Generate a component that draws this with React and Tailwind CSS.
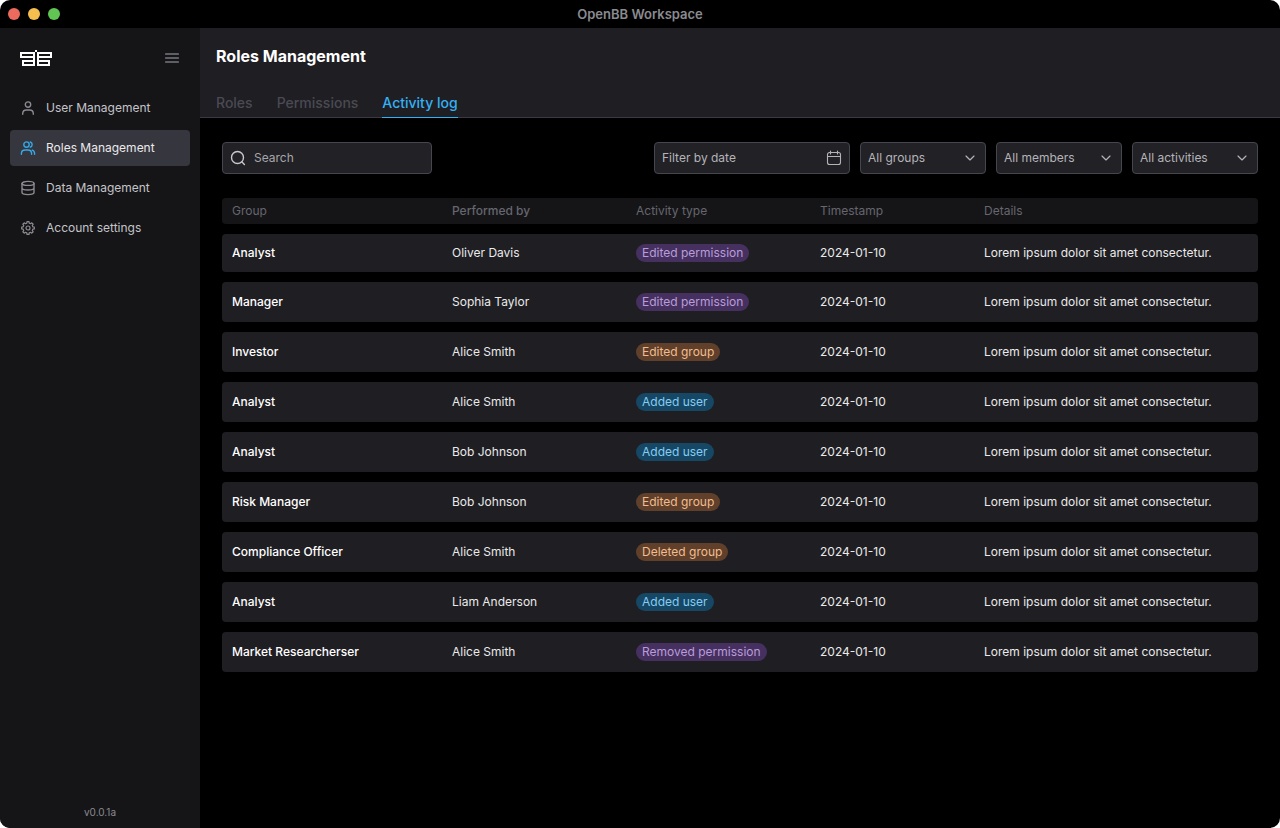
import { useState } from "react";
import { ChevronDown } from "lucide-react";

const font = "font-['Inter',sans-serif]";

function Logo() {
  return (
    <svg width="32" height="16" viewBox="0 0 32 16" fill="#fff" shapeRendering="crispEdges" aria-hidden="true">
      <path d="M15 0h2v2h-2z" />
      <path fillRule="evenodd" d="M0 2h15v14H2v-6h11V8H0zM2 4v2h11V4zM4 12v2h9v-2z" />
      <path fillRule="evenodd" d="M32 2H17v14h13v-6H19V8h13zM30 4v2H19V4zM28 12v2h-9v-2z" />
    </svg>
  );
}

function Icon({ className, width = 1.4, children }) {
  return (
    <svg
      className={`size-4 shrink-0 ${className}`}
      viewBox="0 0 16 16"
      fill="none"
      stroke="currentColor"
      strokeWidth={width}
      strokeLinecap="round"
      strokeLinejoin="round"
      aria-hidden="true"
    >
      {children}
    </svg>
  );
}

function UserIcon({ className }) {
  return (
    <Icon className={className}>
      <circle cx="8" cy="4.6" r="2.7" />
      <path d="M2.7 14.3v-.6c0-2.2 1.6-3.7 3.7-3.7h3.2c2.1 0 3.7 1.5 3.7 3.7v.6" />
    </Icon>
  );
}

function UsersIcon({ className }) {
  return (
    <Icon className={className}>
      <circle cx="6.5" cy="4.6" r="2.7" />
      <path d="M1.4 14.3v-.6c0-2.2 1.6-3.7 3.7-3.7h2.8c2.1 0 3.7 1.5 3.7 3.7v.6" />
      <path d="M10.3 2a2.75 2.75 0 0 1 0 5.2M12.2 10.2c1.5.5 2.4 1.8 2.4 3.5v.6" />
    </Icon>
  );
}

function DatabaseIcon({ className }) {
  return (
    <Icon className={className}>
      <ellipse cx="8" cy="3.4" rx="6" ry="2" />
      <path d="M2 3.4v9.2c0 1.1 2.7 2 6 2s6-.9 6-2V3.4M2 8c0 1.1 2.7 2 6 2s6-.9 6-2" />
    </Icon>
  );
}

const gearPoint = (deg, r) => {
  const a = (deg * Math.PI) / 180;
  return `${(8 + r * Math.cos(a)).toFixed(2)} ${(8 + r * Math.sin(a)).toFixed(2)}`;
};

const gearPath =
  [0, 45, 90, 135, 180, 225, 270, 315]
    .map(
      (a, i) =>
        `${i ? "L" : "M"}${gearPoint(a - 14, 5)}L${gearPoint(a - 9, 6.4)}L${gearPoint(a + 9, 6.4)}L${gearPoint(a + 14, 5)}`
    )
    .join("") + "Z";

function GearIcon({ className }) {
  return (
    <Icon className={className} width={1.2}>
      <circle cx="8" cy="8" r="2" />
      <path d={gearPath} />
    </Icon>
  );
}

const nav = [
  { label: "User Management", Glyph: UserIcon },
  { label: "Roles Management", Glyph: UsersIcon, active: true },
  { label: "Data Management", Glyph: DatabaseIcon },
  { label: "Account settings", Glyph: GearIcon },
];

const tabs = ["Roles", "Permissions", "Activity log"];

const tones = {
  purple: "bg-[#46305f] text-[#b99ddb]",
  orange: "bg-[#60402a] text-[#f0bd90]",
  blue: "bg-[#164764] text-[#86cdf2]",
};

const rows = [
  ["Analyst", "Oliver Davis", "Edited permission", "purple"],
  ["Manager", "Sophia Taylor", "Edited permission", "purple"],
  ["Investor", "Alice Smith", "Edited group", "orange"],
  ["Analyst", "Alice Smith", "Added user", "blue"],
  ["Analyst", "Bob Johnson", "Added user", "blue"],
  ["Risk Manager", "Bob Johnson", "Edited group", "orange"],
  ["Compliance Officer", "Alice Smith", "Deleted group", "orange"],
  ["Analyst", "Liam Anderson", "Added user", "blue"],
  ["Market Researcherser", "Alice Smith", "Removed permission", "purple"],
];

function Filter({ label, name }) {
  return (
    <div className="relative w-[126px]">
      <select
        aria-label={name}
        className="h-8 w-full appearance-none rounded border border-[#46464f] bg-[#222126] pr-7 pl-[7px] text-xs text-[#b4b4b8]"
      >
        <option>{label}</option>
      </select>
      <ChevronDown className="pointer-events-none absolute top-2 right-2 size-4 text-[#b4b4b8]" strokeWidth={1.75} />
    </div>
  );
}

export default function App() {
  const [query, setQuery] = useState("");
  return (
    <div className={`${font} flex min-h-screen flex-col overflow-hidden rounded-[10px] bg-black text-xs text-white`}>
      <div className="grid h-7 shrink-0 grid-cols-[1fr_auto_1fr] items-center px-2">
        <div className="flex gap-2">
          <button aria-label="Close" className="size-3 rounded-full bg-[#ed6a5e]" />
          <button aria-label="Minimize" className="size-3 rounded-full bg-[#f4bf4f]" />
          <button aria-label="Maximize" className="size-3 rounded-full bg-[#61c554]" />
        </div>
        <div className="text-[13px] leading-5 font-semibold text-[#8a8a90]">OpenBB Workspace</div>
      </div>
      <div className="flex flex-1">
        <aside className="flex w-[200px] shrink-0 flex-col bg-[#151518]">
          <div className="flex h-[60px] items-center justify-between px-5">
            <Logo />
            <button aria-label="Toggle menu" className="text-[#77777f]">
              <Icon width={1.7}>
                <path d="M1.8 4h12.4M1.8 8h12.4M1.8 12h12.4" />
              </Icon>
            </button>
          </div>
          <nav className="mt-[2px] flex flex-col gap-1 px-[10px]">
            {nav.map(({ label, Glyph, active }) => (
              <a
                key={label}
                href="#"
                className={`flex h-9 items-center gap-[10px] rounded px-[10px] ${active ? "bg-[#36363f] text-[#eaeaea]" : "text-[#c4c4c8]"}`}
              >
                <Glyph className={active ? "text-[#33a9e8]" : "text-[#8a8a90]"} />
                {label}
              </a>
            ))}
          </nav>
          <div className="mt-auto pb-2 text-center text-[10px] leading-4 text-[#8a8a90]">v0.0.1a</div>
        </aside>
        <main className="min-w-0 flex-1">
          <header className="flex h-[90px] flex-col justify-between border-b border-[#3a3a44] bg-[#1f1e23] px-4">
            <h1 className="pt-4 text-base font-bold">Roles Management</h1>
            <div role="tablist" className="-mb-px flex gap-6 text-sm">
              {tabs.map((t, i) => (
                <button
                  key={t}
                  role="tab"
                  aria-selected={i === 2}
                  className={`border-b pb-1 font-medium ${i === 2 ? "border-[#33b1f5] text-[#33b1f5]" : "border-transparent text-[#4a4a53]"}`}
                >
                  {t}
                </button>
              ))}
            </div>
          </header>
          <div className="px-[22px] pt-6">
            <div className="flex items-center gap-[10px]">
              <label className="mr-auto flex h-8 w-[210px] items-center gap-2 rounded border border-[#46464f] bg-[#222126] px-[7px]">
                <Icon className="text-[#c8c8cc]">
                  <circle cx="7.5" cy="7.5" r="6" />
                  <path d="M12 12l2.4 2.4" />
                </Icon>
                <input
                  aria-label="Search"
                  placeholder="Search"
                  value={query}
                  onChange={(e) => setQuery(e.target.value)}
                  className="w-full bg-transparent text-xs outline-none placeholder:text-[#a6a6aa]"
                />
              </label>
              <button className="flex h-8 w-[196px] items-center justify-between rounded border border-[#46464f] bg-[#222126] px-[7px] text-[#b4b4b8]">
                Filter by date
                <Icon width={1.1}>
                  <path d="M3.5 2.5h9a2 2 0 0 1 2 2v8a2 2 0 0 1-2 2h-9a2 2 0 0 1-2-2v-8a2 2 0 0 1 2-2zM1.5 6.5h13M4.5 1v3M11.5 1v3" />
                </Icon>
              </button>
              <Filter label="All groups" name="Groups" />
              <Filter label="All members" name="Members" />
              <Filter label="All activities" name="Activities" />
            </div>
            <table className="mt-[14px] w-full table-fixed border-separate border-spacing-x-0 border-spacing-y-[10px] text-left">
              <colgroup>
                <col className="w-[220px]" />
                <col className="w-[184px]" />
                <col className="w-[184px]" />
                <col className="w-[164px]" />
                <col />
              </colgroup>
              <thead>
                <tr className="h-[26px] text-[#66666e]">
                  <th className="rounded-l bg-[#151518] px-[10px] font-normal">Group</th>
                  <th className="bg-[#151518] px-[10px] font-medium">Performed by</th>
                  <th className="bg-[#151518] px-[10px] font-normal">Activity type</th>
                  <th className="bg-[#151518] px-[10px] font-normal">Timestamp</th>
                  <th className="rounded-r bg-[#151518] px-[10px] font-normal">Details</th>
                </tr>
              </thead>
              <tbody>
                {rows.map(([group, by, type, tone], i) => (
                  <tr key={i} className="h-10 first:h-[38px]">
                    <td className="rounded-l bg-[#1f1e23] px-[10px] font-medium">{group}</td>
                    <td className="bg-[#1f1e23] px-[10px] text-[#eaeaea]">{by}</td>
                    <td className="bg-[#1f1e23] px-[10px]">
                      <span className={`inline-block rounded-full px-[6px] leading-[18px] ${tones[tone]}`}>{type}</span>
                    </td>
                    <td className="bg-[#1f1e23] px-[10px] text-[#eaeaea]">2024-01-10</td>
                    <td className="rounded-r bg-[#1f1e23] px-[10px] text-[#eaeaea]">Lorem ipsum dolor sit amet consectetur.</td>
                  </tr>
                ))}
              </tbody>
            </table>
          </div>
        </main>
      </div>
    </div>
  );
}
